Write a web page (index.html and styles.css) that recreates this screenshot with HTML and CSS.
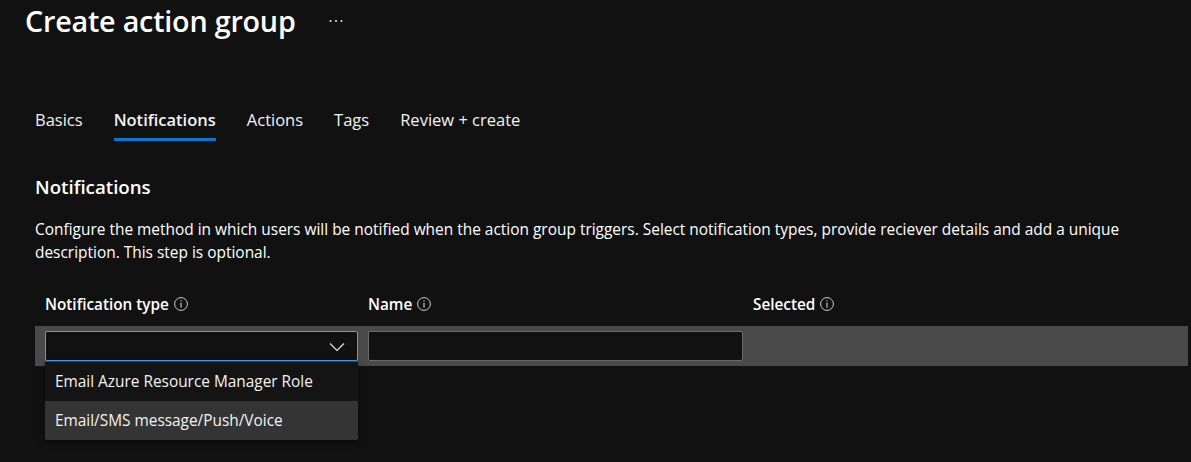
FILE: index.html
```html
<!DOCTYPE html>
<html lang="en">
<head>
<meta charset="utf-8">
<title>Create action group</title>
<link rel="stylesheet" href="styles.css">
</head>
<body>
<div class="page">
  <header class="title-bar">
    <h1 class="title">Create action group</h1>
    <svg class="more" viewBox="0 0 14 4" width="14" height="4"><circle cx="1.5" cy="2" r="1.1" fill="#e0e0e0"/><circle cx="7" cy="2" r="1.1" fill="#e0e0e0"/><circle cx="12.5" cy="2" r="1.1" fill="#e0e0e0"/></svg>
  </header>

  <nav class="tabs">
    <span class="tab">Basics</span>
    <span class="tab active">Notifications</span>
    <span class="tab">Actions</span>
    <span class="tab">Tags</span>
    <span class="tab">Review + create</span>
  </nav>

  <h2 class="section-title">Notifications</h2>
  <p class="desc">Configure the method in which users will be notified when the action group triggers. Select notification types, provide reciever details and add a unique description. This step is optional.</p>

  <div class="grid-head">
    <div class="col col-type">Notification type <span class="info"><svg viewBox="0 0 14 14" width="14" height="14"><circle cx="7" cy="7" r="6.4" fill="none" stroke="#cfcfcf" stroke-width="1"/><rect x="6.5" y="3.3" width="1" height="1.1" fill="#e6e6e6"/><rect x="6.5" y="5.6" width="1" height="5" fill="#e6e6e6"/></svg></span></div>
    <div class="col col-name">Name <span class="info"><svg viewBox="0 0 14 14" width="14" height="14"><circle cx="7" cy="7" r="6.4" fill="none" stroke="#cfcfcf" stroke-width="1"/><rect x="6.5" y="3.3" width="1" height="1.1" fill="#e6e6e6"/><rect x="6.5" y="5.6" width="1" height="5" fill="#e6e6e6"/></svg></span></div>
    <div class="col col-sel">Selected <span class="info"><svg viewBox="0 0 14 14" width="14" height="14"><circle cx="7" cy="7" r="6.4" fill="none" stroke="#cfcfcf" stroke-width="1"/><rect x="6.5" y="3.3" width="1" height="1.1" fill="#e6e6e6"/><rect x="6.5" y="5.6" width="1" height="5" fill="#e6e6e6"/></svg></span></div>
  </div>

  <div class="grid-row">
    <div class="select-wrap">
      <div class="select">
        <svg class="chev" viewBox="0 0 16 10" width="16" height="10"><path d="M1 1.5 L8 8.5 L15 1.5" fill="none" stroke="#e0e0e0" stroke-width="1.2"/></svg>
      </div>
      <ul class="menu">
        <li class="opt">Email Azure Resource Manager Role</li>
        <li class="opt hover">Email/SMS message/Push/Voice</li>
      </ul>
    </div>
    <div class="input"></div>
  </div>
</div>
</body>
</html>
```

FILE: styles.css
```css
* { box-sizing: border-box; }
html, body {
  margin: 0;
  padding: 0;
  background: #111111;
  color: #ffffff;
  font-family: "Segoe UI", "Open Sans", "Noto Sans", sans-serif;
  height: 100%;
  overflow: hidden;
}
.page {
  padding: 0 3px 0 35px;
}
.title-bar {
  display: flex;
  align-items: center;
  height: 42px;
  margin-left: -10px;
}
.title {
  margin: 0;
  font-size: 28.7px;
  font-weight: 600;
  letter-spacing: -0.2px;
  line-height: 42px;
}
.more {
  margin-left: 33px;
  margin-top: -1px;
  display: block;
}
.tabs {
  display: flex;
  gap: 31px;
  margin-top: 61px;
  height: 38px;
}
.tab {
  font-size: 16.5px;
  line-height: 34px;
  height: 38px;
  color: #f2f2f2;
}
.tab.active {
  font-weight: 600;
  border-bottom: 3px solid #0b78d0;
}
.section-title {
  margin: 34px 0 0;
  font-size: 18.7px;
  font-weight: 600;
  line-height: 24px;
}
.desc {
  margin: 19px 0 0;
  font-size: 15.45px;
  line-height: 23px;
  max-width: 1100px;
}
.grid-head {
  display: flex;
  margin-top: 26px;
  padding-left: 10px;
  height: 28px;
  align-items: center;
  font-size: 15.3px;
  font-weight: 600;
}
.col { display: flex; align-items: center; gap: 5px; }
.col-type { width: 323px; }
.col-name { width: 385px; }
.info { display: inline-flex; }
.grid-row {
  margin-top: 8px;
  height: 40px;
  background: #4a4a4a;
  display: flex;
  align-items: flex-start;
  padding: 5px 10px;
  gap: 10px;
}
.select-wrap { position: relative; width: 313px; }
.select {
  height: 30px;
  border: 1px solid #4ba0e8;
  border-radius: 2px;
  background: #111111;
  display: flex;
  align-items: center;
  justify-content: flex-end;
  padding-right: 12px;
}
.chev { display: block; margin-top: 2px; }
.input {
  width: 375px;
  height: 30px;
  border: 1px solid #6a6a6a;
  border-radius: 2px;
  background: #111111;
}
.menu {
  position: absolute;
  left: 0;
  top: 31px;
  width: 313px;
  margin: 0;
  padding: 0;
  list-style: none;
  background: #141414;
  border-radius: 0 0 2px 2px;
  box-shadow: 0 2px 6px rgba(0,0,0,0.5);
}
.opt {
  height: 39px;
  line-height: 39px;
  padding-left: 10px;
  font-size: 15.4px;
  color: #f2f2f2;
}
.opt.hover { background: #343434; border-radius: 0 0 2px 2px; }
```
